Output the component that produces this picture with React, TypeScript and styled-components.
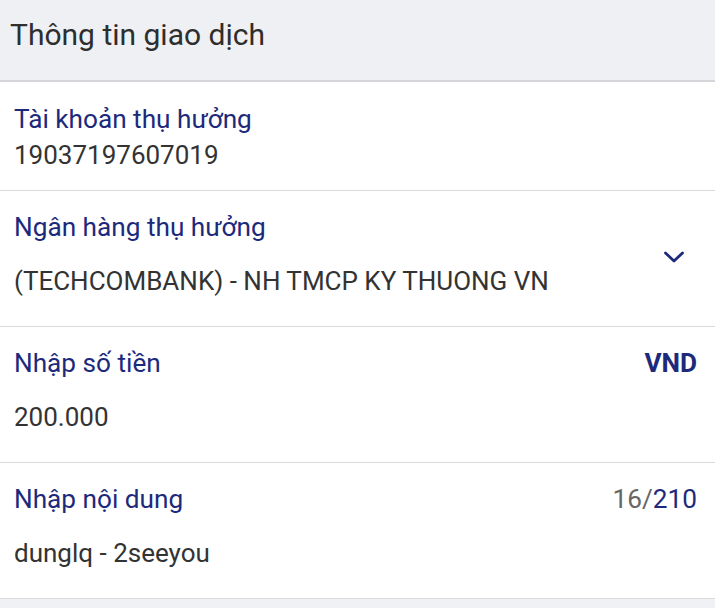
import React from "react";
import styled, { createGlobalStyle } from "styled-components";

const GlobalStyle = createGlobalStyle`
  html, body { margin: 0; padding: 0; background: #f0f1f5; }
  body { font-family: Roboto, "Noto Sans", Arial, sans-serif; }
  * { box-sizing: border-box; }
`;

const NAVY = "#1d2a7c";
const TEXT = "#333333";

const Page = styled.div`
  width: 715px;
  min-height: 608px;
  background: #f0f1f5;
  display: flex;
  flex-direction: column;
`;

const Header = styled.div`
  height: 82px;
  padding: 16px 10px 0;
  background: #eff0f4;
  border-bottom: 2px solid #d5d6da;
  font-size: 30px;
  line-height: 38px;
  color: #2e2e2e;
`;

const Card = styled.div`
  background: #ffffff;
  display: flex;
  flex-direction: column;
`;

const Row = styled.div<{ $tight?: boolean }>`
  display: flex;
  flex-direction: column;
  gap: ${(p) => (p.$tight ? "0px" : "18px")};
  padding: ${(p) => (p.$tight ? "19px 18px 17px 14px" : "18px 18px 27px 14px")};
  border-bottom: 1px solid #d9d9dc;
  position: relative;
`;

const Line = styled.div`
  display: flex;
  align-items: center;
  justify-content: space-between;
  height: 36px;
  font-size: 26.2px;
  line-height: 36px;
`;

const Label = styled.span`
  color: ${NAVY};
`;

const Value = styled.span`
  color: ${TEXT};
  font-size: 26px;
`;

const Unit = styled.span`
  color: ${NAVY};
  font-weight: 700;
`;

const Counter = styled.span`
  color: #666666;
`;

const CounterMax = styled.span`
  color: ${NAVY};
`;

const Chevron = styled.svg`
  position: absolute;
  right: 30px;
  top: 59px;
`;

export default function App() {
  return (
    <>
      <GlobalStyle />
      <Page>
        <Header>Thông tin giao dịch</Header>
        <Card>
          <Row $tight>
            <Line>
              <Label>Tài khoản thụ hưởng</Label>
            </Line>
            <Line>
              <Value>19037197607019</Value>
            </Line>
          </Row>
          <Row>
            <Line>
              <Label>Ngân hàng thụ hưởng</Label>
            </Line>
            <Line>
              <Value>(TECHCOMBANK) - NH TMCP KY THUONG VN</Value>
            </Line>
            <Chevron width="22" height="14" viewBox="0 0 22 14">
              <path d="M2.5 3 L11 11 L19.5 3" fill="none" stroke={NAVY} strokeWidth="2.8" strokeLinecap="round" strokeLinejoin="round" />
            </Chevron>
          </Row>
          <Row>
            <Line>
              <Label>Nhập số tiền</Label>
              <Unit>VND</Unit>
            </Line>
            <Line>
              <Value>200.000</Value>
            </Line>
          </Row>
          <Row>
            <Line>
              <Label>Nhập nội dung</Label>
              <Counter>
                16/<CounterMax>210</CounterMax>
              </Counter>
            </Line>
            <Line>
              <Value>dunglq - 2seeyou</Value>
            </Line>
          </Row>
        </Card>
      </Page>
    </>
  );
}
